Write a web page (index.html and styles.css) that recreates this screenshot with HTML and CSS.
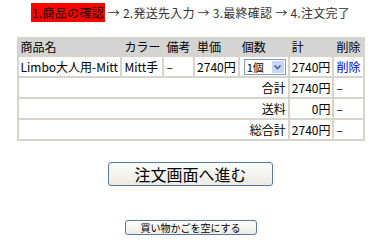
FILE: index.html
```html
<!DOCTYPE html>
<html lang="ja">
<head>
    <meta charset="UTF-8">
    <title>カート</title>
    <link rel="stylesheet" href="styles.css">
</head>
<body>
    <div class="steps">
        <span class="step-current">1.商品の確認</span> → 2.発送先入力 → 3.最終確認 → 4.注文完了
    </div>

    <table class="cart">
        <tr>
            <th class="c-name">商品名</th>
            <th class="c-color">カラー</th>
            <th class="c-note">備考</th>
            <th class="c-price">単価</th>
            <th class="c-qty">個数</th>
            <th class="c-sum">計</th>
            <th class="c-del">削除</th>
        </tr>
        <tr>
            <td>Limbo大人用-Mitt</td>
            <td>Mitt手</td>
            <td>–</td>
            <td>2740円</td>
            <td>
                <div class="qty">
                    <span class="qty-val">1個</span>
                    <span class="qty-btn">
                        <svg width="9" height="6" viewBox="0 0 9 6"><path d="M1.5 1.5 L4.5 4.5 L7.5 1.5" fill="none" stroke="#4d6185" stroke-width="1.6"/></svg>
                    </span>
                </div>
            </td>
            <td>2740円</td>
            <td><a href="#" class="del">削除</a></td>
        </tr>
        <tr>
            <td colspan="5" class="label">合計</td>
            <td class="num">2740円</td>
            <td>–</td>
        </tr>
        <tr>
            <td colspan="5" class="label">送料</td>
            <td class="num">0円</td>
            <td>–</td>
        </tr>
        <tr>
            <td colspan="5" class="label">総合計</td>
            <td class="num">2740円</td>
            <td>–</td>
        </tr>
    </table>

    <div class="actions">
        <button class="btn-order">注文画面へ進む</button>
        <button class="btn-empty">買い物かごを空にする</button>
    </div>
</body>
</html>
```

FILE: styles.css
```css
body {
    margin: 0;
    font-family: "Noto Sans CJK JP", "Liberation Sans", sans-serif;
    font-size: 12px;
    color: #000;
    background: #fff;
}
.steps {
    text-align: center;
    padding-top: 4px;
    height: 18px;
    line-height: 18px;
    color: #333;
    letter-spacing: 0.25px;
}
.step-current {
    background: #ff0000;
    color: #000;
    padding: 1px 1px;
}
.cart {
    width: 348px;
    margin: 15px auto 0;
    border: 1px solid #d8d4cc;
    border-spacing: 0;
}
.cart th,
.cart td {
    border: 1px solid #d8d4cc;
    height: 19px;
    padding: 0 2px;
    text-align: left;
    white-space: nowrap;
    line-height: 16px;
}
.cart th {
    font-weight: normal;
    background: #d4d4d4;
    height: 15px;
}
.c-name { width: 102px; }
.c-color { width: 34px; }
.c-note { width: 31px; }
.c-price { width: 38px; }
.c-qty { width: 44px; }
.c-sum { width: 40px; }
.cart .label,
.cart .num {
    text-align: right;
}
.del {
    color: #0000ee;
    text-decoration: none;
}
.qty {
    display: flex;
    align-items: center;
    width: 40px;
    height: 14px;
    border: 1px solid #7f9db9;
    margin-left: 2px;
    background: #fff;
}
.qty-val {
    flex: 1;
    font-size: 11px;
    padding-left: 2px;
    line-height: 14px;
}
.qty-btn {
    width: 12px;
    height: 12px;
    margin-right: 1px;
    background: #c6d6f7;
    border-radius: 1px;
    display: flex;
    align-items: center;
    justify-content: center;
}
.actions {
    display: flex;
    flex-direction: column;
    align-items: center;
    padding-top: 21px;
}
.actions button {
    font-family: "Noto Sans CJK JP", sans-serif;
    background: linear-gradient(#fdfdfb, #ebeae4);
    border: 1px solid #5c7aa0;
    border-radius: 3px;
    color: #000;
    padding: 0;
}
.btn-order {
    width: 165px;
    height: 24px;
    font-size: 16px;
    line-height: 20px;
}
.btn-empty {
    margin-top: 34px;
    width: 132px;
    height: 15px;
    font-size: 10px;
    line-height: 12px;
}
```
